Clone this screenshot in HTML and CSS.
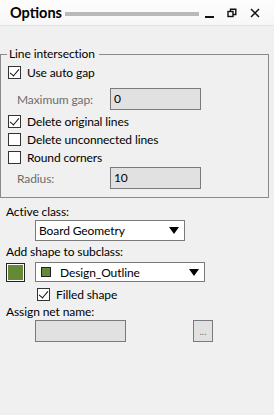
FILE: index.html
```html
<!DOCTYPE html>
<html lang="en">
<head>
    <meta charset="UTF-8">
    <title>Options</title>
    <link rel="stylesheet" href="styles.css">
</head>
<body>
    <div class="titlebar">
        <span class="title">Options</span>
        <span class="grip"></span>
        <span class="tb-btn tb-min">
            <svg width="10" height="10" viewBox="0 0 10 10"><rect x="0" y="8" width="9" height="2" fill="#111"/></svg>
        </span>
        <span class="tb-btn tb-restore">
            <svg width="10" height="10" viewBox="0 0 10 10" fill="none" stroke="#111" stroke-width="1.4"><rect x="1" y="3.5" width="5" height="5"/><path d="M3.5 3.5V1.2H8.8V6.5H6"/></svg>
        </span>
        <span class="tb-btn tb-close">
            <svg width="10" height="10" viewBox="0 0 10 10" stroke="#111" stroke-width="1.5"><path d="M1 1L9 9M9 1L1 9"/></svg>
        </span>
    </div>

    <fieldset class="group">
        <legend>Line intersection</legend>
        <label class="check-row">
            <span class="box checked"></span>Use auto gap
        </label>
        <div class="field-row">
            <span class="field-label">Maximum gap:</span>
            <span class="textbox">0</span>
        </div>
        <label class="check-row">
            <span class="box checked"></span>Delete original lines
        </label>
        <label class="check-row">
            <span class="box"></span>Delete unconnected lines
        </label>
        <label class="check-row">
            <span class="box"></span>Round corners
        </label>
        <div class="field-row radius-row">
            <span class="field-label">Radius:</span>
            <span class="textbox">10</span>
        </div>
    </fieldset>

    <div class="section">
        <div class="caption first">Active class:</div>
        <div class="indent">
            <div class="combo combo-class">
                <span class="combo-text">Board Geometry</span>
                <span class="arrow"></span>
            </div>
        </div>

        <div class="caption caption-sub">Add shape to subclass:</div>
        <div class="swatch-row">
            <span class="swatch"></span>
            <div class="combo combo-sub">
                <span class="mini-swatch"></span>
                <span class="combo-text">Design_Outline</span>
                <span class="arrow"></span>
            </div>
        </div>
        <label class="check-row filled">
            <span class="box checked"></span>Filled shape
        </label>

        <div class="caption">Assign net name:</div>
        <div class="net-row">
            <span class="textbox net-box"></span>
            <span class="dots">...</span>
        </div>
    </div>
</body>
</html>
```

FILE: styles.css
```css
* {
    margin: 0;
    padding: 0;
    box-sizing: border-box;
}

body {
    width: 274px;
    height: 415px;
    background: #f0f0f0;
    font-family: "Lato", sans-serif;
    font-size: 12px;
    letter-spacing: -0.1px;
    color: #000;
    overflow: hidden;
}

/* title bar */
.titlebar {
    height: 26px;
    background: linear-gradient(#fdfdfd, #f7f7f7);
    border-bottom: 1px solid #e3e3e3;
    display: flex;
    align-items: center;
    padding-left: 10px;
}

.title {
    font-weight: bold;
    font-size: 14.5px;
    letter-spacing: 0;
    width: 55px;
    white-space: nowrap;
}

.grip {
    width: 134px;
    height: 4px;
    background: #b9b9b9;
    margin-top: 2px;
}

.tb-btn {
    display: flex;
    justify-content: center;
    align-items: center;
    height: 12px;
}

.tb-min { width: 21px; }
.tb-restore { width: 24px; }
.tb-close { width: 22px; }

/* group box */
.group {
    margin: 21px 5px 0 0;
    border: 1px solid #8a8a8a;
    padding: 2px 6px 8px 6px;
}

.group legend {
    padding: 0 4px 0 2px;
    line-height: 14px;
}

.check-row {
    display: flex;
    align-items: center;
    height: 18px;
    padding-left: 1px;
}

.box {
    width: 13px;
    height: 13px;
    border: 1px solid #333;
    background: #fff;
    margin-right: 6px;
    position: relative;
}

.box.checked::after {
    content: "";
    position: absolute;
    left: 3px;
    top: 0px;
    width: 4px;
    height: 8px;
    border-right: 1.2px solid #111;
    border-bottom: 1.2px solid #111;
    transform: rotate(40deg);
}

.field-row {
    display: flex;
    align-items: center;
    height: 22px;
    margin: 7px 0 2px 0;
}

.radius-row {
    margin: 1px 0 0 0;
}

.field-label {
    color: #6d6d6d;
    width: 103px;
    padding-left: 10px;
    white-space: nowrap;
}

.textbox {
    width: 91px;
    height: 22px;
    background: #e1e1e1;
    border: 1px solid #7a7a7a;
    padding-left: 3px;
    line-height: 20px;
}

/* lower section */
.section {
    padding-left: 6px;
}

.caption {
    height: 17px;
    line-height: 17px;
}

.caption.first {
    margin-top: 5px;
}

.indent {
    padding-left: 29px;
}

.combo {
    height: 21px;
    background: #fff;
    border: 1px solid #7a7a7a;
    display: flex;
    align-items: center;
    padding-left: 3px;
    position: relative;
}

.combo-class {
    width: 150px;
}

.combo-sub {
    width: 170px;
    margin-left: 10px;
    height: 20px;
}

.arrow {
    position: absolute;
    right: 5px;
    top: 6px;
    width: 0;
    height: 0;
    border-left: 5px solid transparent;
    border-right: 5px solid transparent;
    border-top: 7px solid #000;
}

.caption-sub {
    margin-top: 2px;
}

.swatch-row {
    display: flex;
    align-items: center;
    margin-top: 2px;
}

.swatch {
    width: 19px;
    height: 19px;
    border: 1px solid #222;
    background: #648a37;
    box-shadow: inset 0 0 0 1px #fff;
}

.mini-swatch {
    width: 10px;
    height: 10px;
    border: 1px solid #222;
    background: #648a37;
    margin: 0 9px 0 2px;
}

.filled {
    padding-left: 31px;
    margin-top: 4px;
    height: 17px;
}

.net-row {
    display: flex;
    align-items: center;
    padding-left: 29px;
}

.net-box {
    width: 91px;
}

.dots {
    width: 20px;
    height: 22px;
    border: 1px solid #7a7a7a;
    background: #e1e1e1;
    margin-left: 67px;
    color: #777;
    text-align: center;
    line-height: 20px;
    font-size: 10px;
}
```
